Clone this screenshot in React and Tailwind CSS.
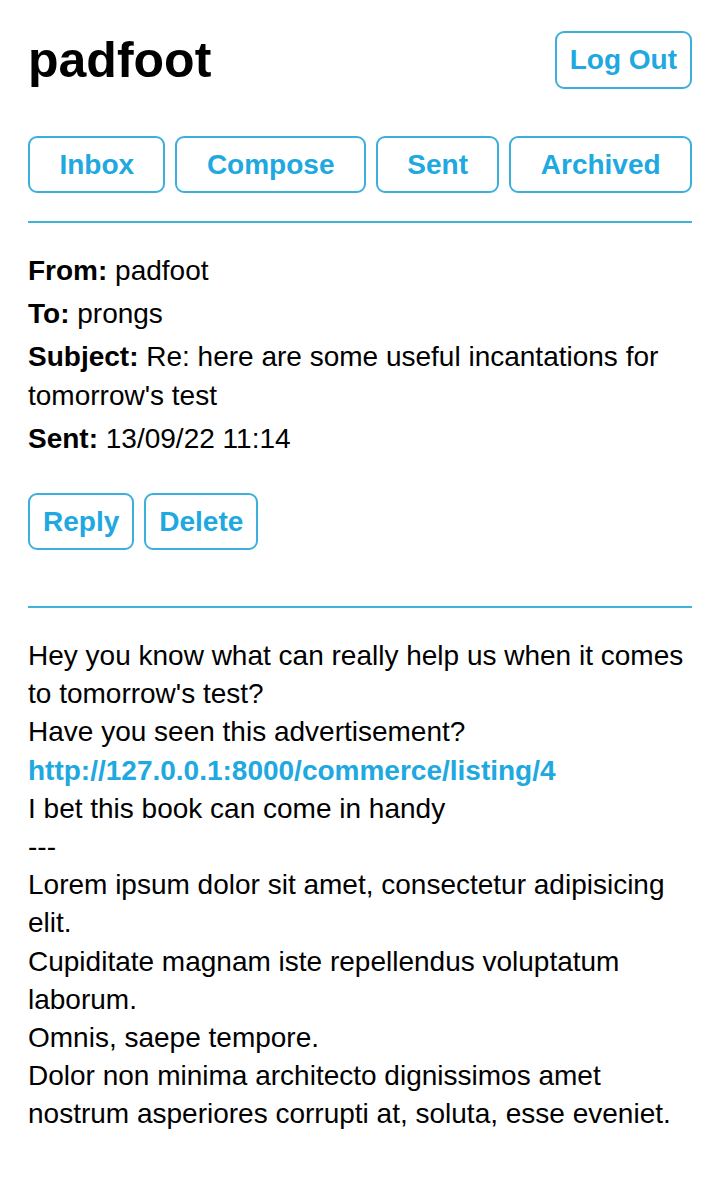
const font = { fontFamily: '"Liberation Sans", Arial, sans-serif' };

const navItems = ['Inbox', 'Compose', 'Sent', 'Archived'];

const OutlineButton = ({ children, className = '' }) => (
    <button
        className={`border-2 border-[#3cb0dc] rounded-[9px] text-[#20a8e0] text-[28px] font-bold leading-[32px] bg-white ${className}`}
    >
        {children}
    </button>
);

const Field = ({ label, children }) => (
    <p>
        <b>{label}:</b> {children}
    </p>
);

export default function App() {
    return (
        <div className="min-h-screen bg-white text-black px-[28px]" style={font}>
            <header className="flex items-center justify-between pt-[31px]">
                <h1 className="text-[50px] font-bold leading-[58px]">padfoot</h1>
                <OutlineButton className="h-[58px] px-[13px]">Log Out</OutlineButton>
            </header>

            <nav className="mt-[47px] flex gap-[10px]">
                {navItems.map((item) => (
                    <OutlineButton key={item} className="h-[57px] flex-auto px-[29px]">
                        {item}
                    </OutlineButton>
                ))}
            </nav>

            <div className="mt-[28px] h-[2px] bg-[#3fb4d8]" />

            <div className="mt-[28px] flex flex-col gap-[4px] text-[28px] leading-[39px]">
                <Field label="From">padfoot</Field>
                <Field label="To">prongs</Field>
                <Field label="Subject">Re: here are some useful incantations for tomorrow's test</Field>
                <Field label="Sent">13/09/22 11:14</Field>
            </div>

            <div className="mt-[35px] flex gap-[10px]">
                <OutlineButton className="h-[57px] px-[13px]">Reply</OutlineButton>
                <OutlineButton className="h-[57px] px-[13px]">Delete</OutlineButton>
            </div>

            <div className="mt-[56px] h-[2px] bg-[#3fb4d8]" />

            <div className="mt-[29px] pb-[60px] text-[28px] leading-[38.2px]">
                Hey you know what can really help us when it comes to tomorrow's test?
                <br />
                Have you seen this advertisement?
                <br />
                <a href="#" className="font-bold text-[#20a8e0]">http://127.0.0.1:8000/commerce/listing/4</a>
                <br />
                I bet this book can come in handy
                <br />
                ---
                <br />
                Lorem ipsum dolor sit amet, consectetur adipisicing elit.
                <br />
                Cupiditate magnam iste repellendus voluptatum laborum.
                <br />
                Omnis, saepe tempore.
                <br />
                Dolor non minima architecto dignissimos amet nostrum asperiores corrupti at, soluta, esse eveniet.
            </div>
        </div>
    );
}
